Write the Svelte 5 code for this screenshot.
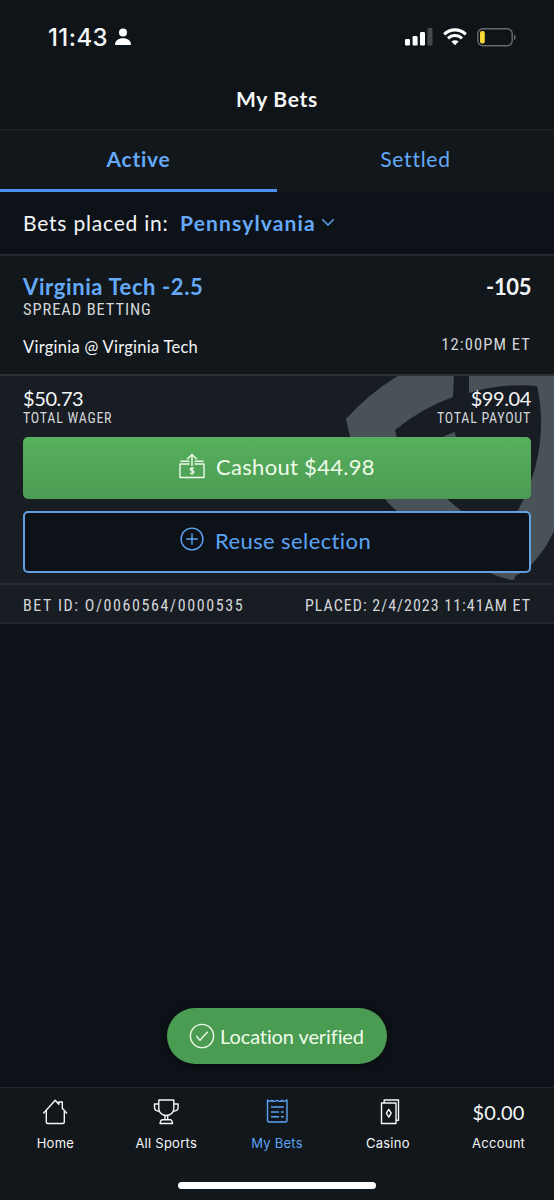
<script>
    let activeTab = $state("Active");
    let activePage = $state("My Bets");

    const tabs = ["Active", "Settled"];
    const bet = {
        selection: "Virginia Tech -2.5",
        odds: "-105",
        market: "SPREAD BETTING",
        event: "Virginia @ Virginia Tech",
        time: "12:00PM ET",
        wager: "$50.73",
        payout: "$99.04",
        cashout: "$44.98",
        id: "O/0060564/0000535",
        placed: "2/4/2023 11:41AM ET"
    };
    const pages = ["Home", "All Sports", "My Bets", "Casino", "Account"];
</script>

<div class="app">
    <header>
        <div class="status">
            <span class="clock">11:43</span>
            <svg width="16" height="18" viewBox="0 0 16 18" fill="#fff">
                <circle cx="8" cy="4.5" r="4" />
                <path d="M0 17C0 12.5 3.2 10.2 8 10.2s8 2.3 8 6.8z" />
            </svg>
            <div class="signals">
                <svg width="28" height="18" viewBox="0 0 28 18" fill="#fff">
                    <rect x="0" y="11" width="5" height="6.5" rx="1.3" />
                    <rect x="7.6" y="8" width="5" height="9.5" rx="1.3" />
                    <rect x="15" y="4" width="5" height="13.5" rx="1.3" />
                    <rect x="22.5" y="0" width="5" height="17.5" rx="1.3" fill="#46494c" />
                </svg>
                <svg class="wifi" width="24" height="18" viewBox="0 0 24 18" fill="none" stroke="#fff" stroke-width="3.1">
                    <path d="M1.2 6.4C7.3.4 16.7.4 22.8 6.4" />
                    <path d="M5 10.4c4-3.9 10-3.9 14 0" />
                    <path d="M8.4 13.4c2.2-1.7 5-1.7 7.2 0L12 17.2z" fill="#fff" stroke="none" />
                </svg>
                <svg class="battery" width="40" height="19" viewBox="0 0 40 19">
                    <rect x=".8" y=".8" width="34.4" height="17" rx="5" fill="none" stroke="#686b6d" stroke-width="1.4" />
                    <rect x="3" y="3" width="4.8" height="12.6" rx="2" fill="#fbd935" />
                    <path d="M37 6.5c2.2.8 2.2 5 0 5.8z" fill="#686b6d" />
                </svg>
            </div>
        </div>
        <h1>My Bets</h1>
    </header>

    <nav class="tabs">
        {#each tabs as tab}
            <button class:active={activeTab === tab} onclick={() => (activeTab = tab)}>{tab}</button>
        {/each}
    </nav>

    <div class="filter">
        <span class="label">Bets placed in:</span>
        <span class="state">Pennsylvania</span>
        <svg width="14" height="9" viewBox="0 0 14 9" fill="none" stroke="#5ca3f5" stroke-width="1.4">
            <path d="M1.2 1.3 7 7l5.8-5.7" />
        </svg>
    </div>

    <section class="bet">
        <div class="row pick">
            <strong class="selection">{bet.selection}</strong>
            <strong class="odds">{bet.odds}</strong>
        </div>
        <div class="row market">{bet.market}</div>
        <div class="row event">
            <span>{bet.event}</span>
            <span class="time">{bet.time}</span>
        </div>
    </section>

    <section class="details">
        <svg class="emblem" width="554" height="208" viewBox="0 376 554 208" fill="#485258">
            <path d="M401 374h53l-1 23q-31 11-58 33 8 44 52 69l18 15h-65C374 491 354 462 346 419q23-26 55-45z" />
            <path d="M430 445q11-9 25-13l2 13z" />
            <path d="M469 374h85v157q-8 18-22 33-10 9-17 12 0 4-3 4-11-2-24-8l29-60q34-62 20-126-36-3-68 7z" />
        </svg>
        <div class="row amounts">
            <div>
                <div class="amount">{bet.wager}</div>
                <div class="caption">TOTAL WAGER</div>
            </div>
            <div class="right">
                <div class="amount">{bet.payout}</div>
                <div class="caption">TOTAL PAYOUT</div>
            </div>
        </div>
        <button class="action cashout">
            <svg width="26" height="27" viewBox="0 0 26 27" fill="none" stroke="#effbea" stroke-width="1.4">
                <path d="M10.5 11H1v13.5h24V11h-9.5M10.5 8.2H1.5M15.5 8.2h9M13 13V1.8M8.2 6.3 13 1.5l4.8 4.8" />
                <path d="M15 15.6c-.8-.9-3.7-.8-3.7.7 0 1.7 3.8 1 3.8 2.8 0 1.7-3 1.8-4 .7M13.1 14v8" stroke-width="1.2" />
            </svg>
            <span>Cashout {bet.cashout}</span>
        </button>
        <button class="action reuse">
            <svg width="24" height="24" viewBox="0 0 24 24" fill="none" stroke="#5ca3f5" stroke-width="1.4">
                <circle cx="12" cy="12" r="10.9" />
                <path d="M12 6.2v11.6M6.2 12h11.6" />
            </svg>
            <span>Reuse selection</span>
        </button>
    </section>

    <div class="row receipt">
        <span class="bet-id">BET ID: {bet.id}</span>
        <span>PLACED: {bet.placed}</span>
    </div>

    <div class="space">
        <div class="toast">
            <svg width="26" height="26" viewBox="0 0 26 26" fill="none" stroke="#effbea" stroke-width="1.4">
                <circle cx="13" cy="13" r="11.6" />
                <path d="m7.2 13 3.8 4.2 7.7-8.5" />
            </svg>
            <span>Location verified</span>
        </div>
    </div>

    <footer>
        <nav class="bottom">
            {#each pages as page}
                <button class:current={activePage === page} onclick={() => (activePage = page)}>
                    <span class="icon">
                        {#if page === "Account"}
                            <span class="balance">$0.00</span>
                        {:else}
                            <svg width="26" height="26" viewBox="0 0 26 26" fill="none" stroke="currentColor" stroke-width="1.4" stroke-linejoin="round" stroke-linecap="round">
                                {#if page === "Home"}
                                    <path d="M1.7 14 13.2 1.3l3.6 4V3h3.5v6.2l4.3 4.8M4.3 11.6V23q0 1.5 1.5 1.5h15q1.5 0 1.5-1.5V11.6" />
                                {:else if page === "All Sports"}
                                    <path d="M5.8 1h15v8.5c0 4-3.4 7-7.5 7s-7.5-3-7.5-7zM5.8 5H1.5v3.5c0 2.3 2.2 3.7 5 3.7M20.8 5h4.3v3.5c0 2.3-2.2 3.7-5 3.7M11.9 16.5v4.2M14.7 16.5v4.2M9.3 20.7h8q1.7 0 2.3 3.8H7q.6-3.8 2.3-3.8z" />
                                {:else if page === "My Bets"}
                                    <path d="M3.5 1q2.2 2.2 4.4.4Q10.3 3.4 13 1.4q2.7 2 5.1 0Q20.3 3.2 23 1v20.5q0 1.5-1.5 1.5H5q-1.5 0-1.5-1.5z" />
                                    <path d="M7.5 8h11.8M7.5 13h7M17.5 13h1.8M7.5 17.8h7M17.5 17.8h1.8" />
                                {:else}
                                    <path d="M6.5 4H21v20.5H6.5zM9.2 3.8V1h14.3v20.3h-2.3" />
                                    <path d="m13.8 10.3 2.4 3.9-2.4 3.9-2.4-3.9z" />
                                {/if}
                            </svg>
                        {/if}
                    </span>
                    <span class="name">{page}</span>
                </button>
            {/each}
        </nav>
        <div class="home-bar"></div>
    </footer>
</div>

<style>
    :global(body) {
        background: #0d1218;
    }
    .app {
        width: 554px;
        height: 1200px;
        display: flex;
        flex-direction: column;
        overflow: hidden;
        box-sizing: border-box;
        background: #0d1218;
        color: #f4f6f8;
        font-family: Lato, "Open Sans", sans-serif;
        font-variant-ligatures: none;
        white-space: nowrap;
    }
    button {
        padding: 0;
        border: 0;
        background: none;
        color: inherit;
        font: inherit;
        font-variant-ligatures: none;
    }
    svg {
        display: block;
        flex: none;
    }
    header {
        height: 129px;
        flex: none;
        background: #0f1418;
        border-bottom: 1px solid #24292d;
    }
    .status {
        height: 74px;
        padding: 0 38px 0 48px;
        display: flex;
        align-items: center;
    }
    .clock {
        width: 67px;
        padding-top: 1px;
        font: 500 24px/74px Inter, sans-serif;
        letter-spacing: 0.4px;
    }
    .signals {
        display: flex;
        align-items: center;
        margin-left: auto;
    }
    .wifi {
        margin-left: 10px;
    }
    .battery {
        margin-left: 10px;
        margin-right: -1px;
    }
    h1 {
        margin: 0;
        text-align: center;
        font-size: 21px;
        line-height: 50px;
        font-weight: 700;
        letter-spacing: 0.7px;
    }
    .tabs {
        height: 62px;
        flex: none;
        display: flex;
        background: #11171a;
    }
    .tabs button {
        flex: 1;
        padding-bottom: 2px;
        border-bottom: 3px solid transparent;
        font-size: 21px;
        color: #65a9f8;
        letter-spacing: 0.75px;
    }
    .tabs .active {
        font-weight: 700;
        border-color: #4c91ed;
    }
    .filter {
        height: 60px;
        flex: none;
        padding: 0 0 2px 23px;
        display: flex;
        align-items: center;
        background: #0d1219;
        border-bottom: 2px solid #24292f;
        font-size: 21px;
    }
    .label {
        width: 157px;
        letter-spacing: 0.8px;
    }
    .state {
        width: 141px;
        color: #65a9f8;
        font-weight: 700;
        letter-spacing: 1.15px;
    }
    .row {
        display: flex;
        justify-content: space-between;
    }
    .bet {
        height: 118px;
        flex: none;
        box-sizing: border-box;
        padding: 18px 23px 0;
        background: #11171a;
    }
    .pick {
        font-size: 22px;
        line-height: 26px;
    }
    .selection {
        color: #65a9f8;
        letter-spacing: 0.6px;
    }
    .odds {
        letter-spacing: -0.4px;
    }
    .market, .time, .caption, .receipt {
        font-family: Roboto, sans-serif;
        font-stretch: 75%;
        color: #d3d7da;
    }
    .market {
        font-size: 16.5px;
        line-height: 20px;
        letter-spacing: 0.9px;
    }
    .event {
        margin-top: 15px;
        font-size: 16.5px;
        line-height: 24px;
        letter-spacing: 0.27px;
    }
    .time {
        line-height: 20px;
        letter-spacing: 1.1px;
    }
    .details {
        position: relative;
        height: 211px;
        flex: none;
        box-sizing: border-box;
        padding: 11px 23px 0;
        background: #181c23;
        border-top: 2px solid #2b3036;
        border-bottom: 2px solid #282d34;
    }
    .emblem {
        position: absolute;
        top: 0;
        left: 0;
    }
    .amounts {
        position: relative;
        height: 50px;
    }
    .amount {
        font-size: 20px;
        line-height: 22px;
        letter-spacing: -0.4px;
    }
    .caption {
        font-size: 14px;
        line-height: 18px;
        letter-spacing: 0.75px;
    }
    .right {
        text-align: right;
    }
    .action {
        position: relative;
        width: 508px;
        height: 62px;
        box-sizing: border-box;
        display: flex;
        align-items: center;
        padding-left: 156px;
        border-radius: 5px;
        font-size: 22px;
    }
    .action span {
        margin-left: 11px;
    }
    .cashout {
        padding-bottom: 3px;
        color: #effbea;
        background: linear-gradient(#56b05d, #4c9b53);
        letter-spacing: 0.3px;
    }
    .reuse {
        margin-top: 12px;
        padding-bottom: 4px;
        padding-left: 155px;
        color: #5ca3f5;
        background: #0d1218;
        border: 2px solid #619fe0;
        letter-spacing: 0.4px;
    }
    .reuse svg {
        margin-bottom: 2px;
    }
    .receipt {
        height: 37px;
        flex: none;
        padding: 0 23px;
        line-height: 41px;
        font-size: 16px;
        background: #181c23;
        border-bottom: 2px solid #24292f;
        letter-spacing: 1px;
    }
    .bet-id {
        letter-spacing: 1.6px;
    }
    .space {
        flex: 1;
        display: flex;
        align-items: flex-end;
        justify-content: center;
        padding-bottom: 23px;
    }
    .toast {
        width: 220px;
        height: 56px;
        box-sizing: border-box;
        padding: 0 0 1px 22px;
        display: flex;
        align-items: center;
        gap: 5px;
        border-radius: 28px;
        background: #4b9c53;
        color: #effbea;
        font-size: 20px;
        letter-spacing: -0.1px;
        box-shadow: 0 2px 8px rgba(0, 0, 0, .4);
    }
    footer {
        height: 112px;
        flex: none;
        background: #11171a;
        border-top: 1px solid #22282c;
    }
    .bottom {
        display: grid;
        grid-template-columns: repeat(5, 1fr);
        height: 94px;
    }
    .bottom button {
        display: flex;
        flex-direction: column;
        align-items: center;
        padding-top: 11px;
    }
    .bottom .current {
        color: #5ca3f5;
    }
    .icon {
        height: 26px;
    }
    .name {
        margin-top: 8px;
        font: 400 13px/20px Inter, sans-serif;
        letter-spacing: 0.25px;
    }
    .balance {
        font-size: 20px;
        line-height: 26px;
        letter-spacing: 0.2px;
    }
    .home-bar {
        width: 198px;
        height: 7px;
        margin: 0 auto;
        border-radius: 4px;
        background: #fff;
    }
</style>
